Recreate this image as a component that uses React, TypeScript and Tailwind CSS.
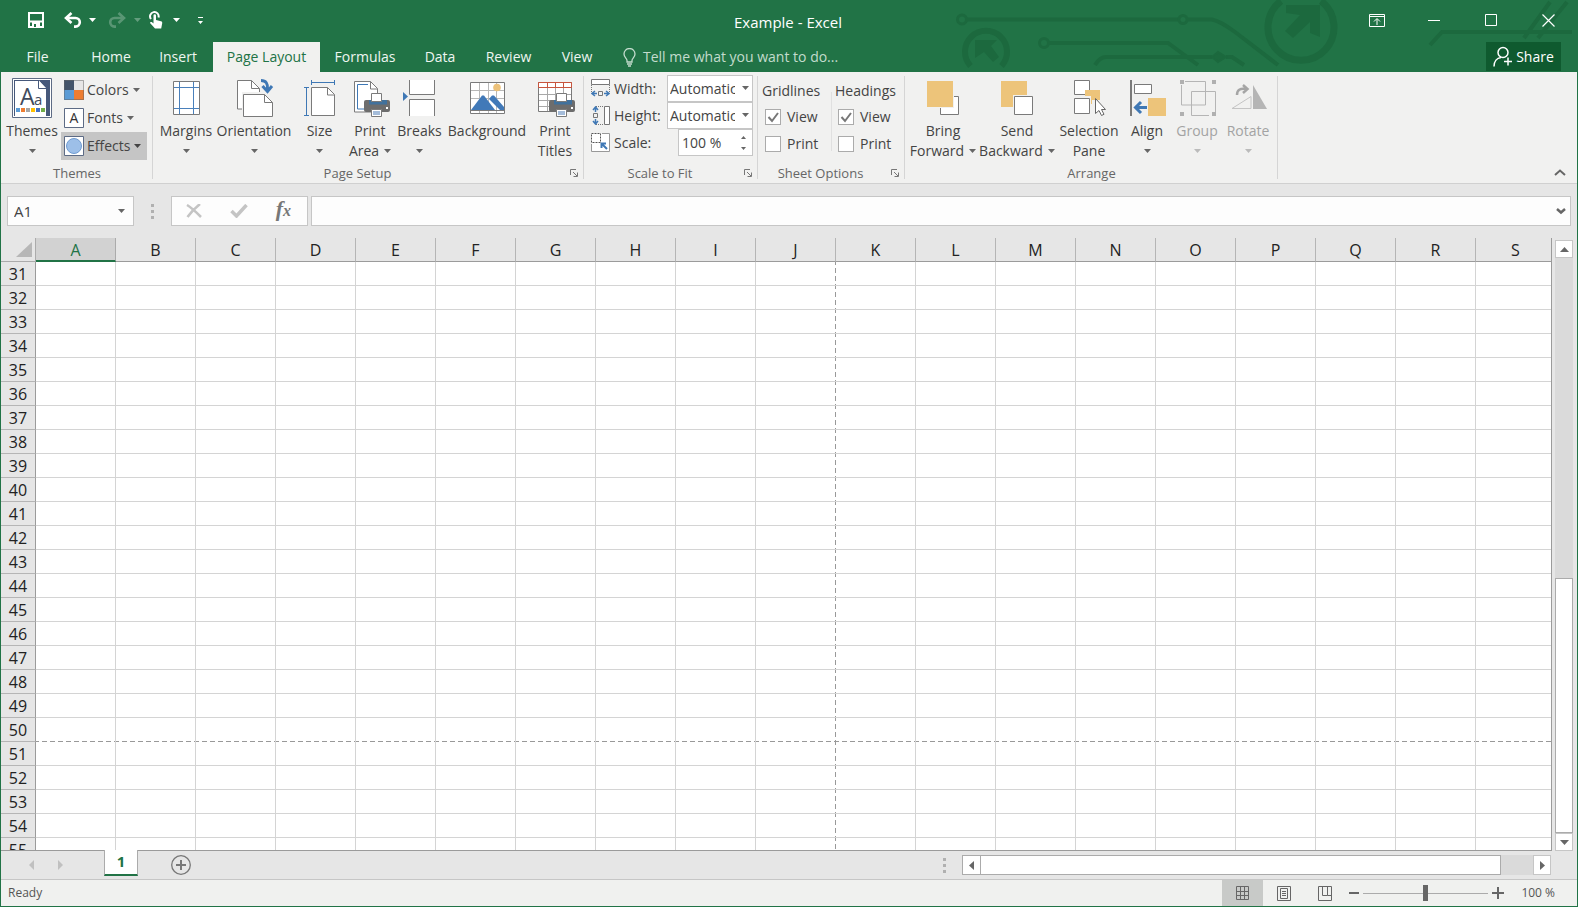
import { useState } from 'react';
import type { ReactNode } from 'react';

const columns = 'ABCDEFGHIJKLMNOPQRS'.split('');
const rows = Array.from({ length: 25 }, (_, i) => 31 + i);

const tabs = [
  { name: 'File', width: 'w-[73px]' },
  { name: 'Home', width: 'w-[74px]' },
  { name: 'Insert', width: 'w-[60px]' },
  { name: 'Page Layout', width: 'w-[107px] ml-[5px]' },
  { name: 'Formulas', width: 'w-[90px]' },
  { name: 'Data', width: 'w-[60px]' },
  { name: 'Review', width: 'w-[77px]' },
  { name: 'View', width: 'w-[60px]' },
];

function Caret({ className = 'text-[#666]' }: { className?: string }) {
  return (
    <svg width="7" height="4" viewBox="0 0 7 4" className={`shrink-0 ${className}`}>
      <path d="M0 0h7L3.5 4z" fill="currentColor" />
    </svg>
  );
}

/* ---------- Title bar ---------- */

function Circuit() {
  return (
    <svg width="628" height="72" viewBox="0 0 628 72" className="absolute -right-px top-0" fill="none" stroke="#1c693e" strokeWidth="4">
      <circle cx="12" cy="19.5" r="4.5" strokeWidth="3" />
      <path d="M17 19.5H228" />
      <circle cx="233" cy="19.5" r="4" strokeWidth="3" />
      <path d="M238 19.5H262Q270 21 285 32L328 65" />
      <circle cx="94" cy="43" r="4.5" strokeWidth="3" />
      <path d="M99 43H218L248 65" />
      <path d="M145 65Q150 57 156 57H262M276 57H282L294 65" />
      <path d="M262 57L268 52L276 57L268 62Z" fill="#1c693e" strokeWidth="2" />
      <path d="M20.5 66A21 21 0 1 1 51.5 66" strokeWidth="6" />
      <path d="M25 40H47L41 46L49 57L43 62L34 52L25 58Z" fill="#1c693e" stroke="none" />
      <path d="M331 1A33 33 0 1 0 371 1" strokeWidth="7" />
      <path d="M336 5H370V37L360 33V22L343 38L335 31L350 15L336 13Z" fill="#1c693e" stroke="none" />
      <path d="M480 45L492 32H622M574 38L600 2M588 38L617 2" />
    </svg>
  );
}

function TitleBar() {
  return (
    <div className="relative flex h-[42px] items-center pb-0.5 text-white">
      <div className="flex items-center">
        <button aria-label="Save" className="ml-[27px]">
          <svg width="16" height="16" viewBox="0 0 16 16">
            <path d="M1 1h14v14H1zM1 9.5h14" fill="none" stroke="#fff" strokeWidth="2" />
            <path d="M4 10h8v5H4z" fill="#fff" />
            <path d="M6 12h2v3H6z" fill="#217346" />
          </svg>
        </button>
        <button aria-label="Undo" className="ml-5">
          <svg width="18" height="16" viewBox="0 0 18 16" fill="none" stroke="#fff" strokeWidth="2.6">
            <path d="M2 6h9.5a4.3 4.3 0 0 1 0 8.6H10" />
            <path d="M7.5 1L2 6L7.5 11" />
          </svg>
        </button>
        <button aria-label="Undo history" className="ml-[7px]"><Caret className="text-white" /></button>
        <button aria-label="Redo" className="ml-3 opacity-25" disabled>
          <svg width="18" height="16" viewBox="0 0 18 16" fill="none" stroke="#fff" strokeWidth="2.6">
            <path d="M16 6H6.5a4.3 4.3 0 0 0 0 8.6H8" />
            <path d="M10.5 1L16 6L10.5 11" />
          </svg>
        </button>
        <button aria-label="Redo history" className="ml-2 opacity-30" disabled><Caret className="text-white" /></button>
        <button aria-label="Touch mode" className="ml-2">
          <svg width="14" height="18" viewBox="0 0 14 18">
            <path d="M2 8A4.3 4.3 0 1 1 9.5 6.5" fill="none" stroke="#fff" strokeWidth="2" />
            <path d="M4.5 4.5a1.2 1.2 0 0 1 2.5 0V9l5 1.2c1 .3 1.4 1 1.2 2L12.2 17.5H6L1 12c0-1 1.5-1.4 2.3-.6l1.2 1z" fill="#fff" />
          </svg>
        </button>
        <button aria-label="Touch options" className="ml-2.5"><Caret className="text-white" /></button>
        <button aria-label="Customize toolbar" className="ml-[18px]">
          <svg width="5" height="7" viewBox="0 0 5 7"><path d="M0 0h5v1H0zM0 4h5L2.5 7z" fill="#fff" /></svg>
        </button>
      </div>
      <h1 className="absolute inset-x-0 top-3 pr-0.5 text-center text-[15px] leading-[21px]">Example - Excel</h1>
      <div className="relative ml-auto flex">
        <button aria-label="Ribbon display options" className="flex w-[57px] justify-center">
          <svg width="16" height="13" viewBox="0 0 16 13" fill="none" stroke="#fff">
            <path d="M.5.5h15v12H.5zM.5 2.5h15M8 11V5M5 7.5L8 4.5L11 7.5" />
          </svg>
        </button>
        <button aria-label="Minimize" className="flex w-[57px] items-center justify-center">
          <svg width="12" height="13" viewBox="0 0 12 13"><path d="M0 6.5h12" stroke="#fff" /></svg>
        </button>
        <button aria-label="Maximize" className="flex w-[57px] justify-center">
          <svg width="12" height="12" viewBox="0 0 12 12"><path d="M.5.5h11v11H.5z" fill="none" stroke="#fff" /></svg>
        </button>
        <button aria-label="Close" className="flex w-[58px] justify-center">
          <svg width="13" height="13" viewBox="0 0 13 13"><path d="M.5.5l12 12M12.5.5l-12 12" stroke="#fff" strokeWidth="1.2" /></svg>
        </button>
      </div>
    </div>
  );
}

function TabBar() {
  const [active, setActive] = useState('Page Layout');
  return (
    <nav className="relative flex h-[30px] text-[14px] leading-[30px]">
      {tabs.map((tab) => (
        <button
          key={tab.name}
          onClick={() => setActive(tab.name)}
          className={`${tab.width} ${active === tab.name ? 'bg-[#f1f1ef] text-[#217346]' : 'text-[#eef6f1]'}`}
        >
          {tab.name}
        </button>
      ))}
      <button className="ml-4 flex items-center gap-[7px] text-[#c3dccd]">
        <svg width="13" height="19" viewBox="0 0 13 19" fill="none" stroke="currentColor" strokeWidth="1.3">
          <path d="M4 14V12.5C4 10.5 1 9.5 1 6a5.5 5.5 0 0 1 11 0c0 3.500-3 4.500-3 6.500V14zM4 16h5M5 18h3" />
        </svg>
        Tell me what you want to do...
      </button>
      <button className="mb-px ml-auto mr-4 flex w-[75px] items-center justify-center gap-[3px] bg-[#0f5a2f] text-white">
        <svg width="20" height="21" viewBox="0 0 20 21" fill="none" stroke="#fff" strokeWidth="1.5">
          <circle cx="10" cy="6.5" r="5" />
          <path d="M1 20.5C1 15.5 4 12 8 11.500M11 15.500h8M15 11.500v8" />
        </svg>
        Share
      </button>
    </nav>
  );
}

/* ---------- Ribbon ---------- */

function Icon({ children }: { children: ReactNode }) {
  return (
    <svg width="44" height="40" viewBox="0 0 44 40" fill="none" stroke="#7a7a7a" className="shrink-0">
      {children}
    </svg>
  );
}

function Printer() {
  return (
    <g stroke="none">
      <path d="M18 22h22q2 0 2 2v8q0 2-2 2H18q-2 0-2-2v-8q0-2 2-2z" fill="#6d6d6d" />
      <path d="M21 22h18v4.5H21z" fill="#41719c" />
      <path d="M23.5 15.5h10v8h-10z" fill="#fff" stroke="#7a7a7a" />
      <path d="M38 29h2v2h-2z" fill="#fff" />
      <path d="M23.5 31.5h10v7h-10z" fill="#fff" stroke="#7a7a7a" />
      <path d="M25 34h7M25 36h7" stroke="#4a7ab5" />
    </g>
  );
}

const icons = {
  themes: (
    <svg width="40" height="40" viewBox="0 0 40 40" className="shrink-0">
      <path d="M.5.5h39v39H.5z" fill="#fff" stroke="#5d6b85" />
      <path d="M2 2h36v36H2z" fill="#46587a" />
      <path d="M3 3h24l7 7v28H3z" fill="#fff" />
      <path d="M26.5 2v8.5H34" fill="#fff" stroke="#46587a" />
      <text x="8" y="27" fontSize="23" fill="#404a5c" fontFamily="Open Sans">A</text>
      <text x="22" y="27" fontSize="15" fill="#404a5c" fontFamily="Open Sans">a</text>
      <path d="M4 30h4v4H4z" fill="#5b9bd5" />
      <path d="M9 30h4v4H9z" fill="#ed7d31" />
      <path d="M14 30h4v4h-4z" fill="#a5a5a5" />
      <path d="M19 30h4v4h-4z" fill="#ffc000" />
      <path d="M24 30h4v4h-4z" fill="#4472c4" />
      <path d="M29 30h4v4h-4z" fill="#70ad47" />
    </svg>
  ),
  margins: (
    <Icon>
      <path d="M9.5 3.5h26v33h-26z" fill="#fff" />
      <path d="M15.5 4v32M29.5 4v32M10 9.5h25M10 30.5h25" stroke="#4a80bb" />
    </Icon>
  ),
  orientation: (
    <Icon>
      <path d="M5.5 2.5h14l8 8v20.5h-22z" fill="#fff" />
      <path d="M19.5 2.5v8h8" />
      <path d="M10 14h32v25.5H10z" fill="#f1f1f0" stroke="none" />
      <path d="M11.5 16.5h21l8 8v14h-29z" fill="#fff" />
      <path d="M32.5 16.5v8h8" />
      <path d="M29 2.5c5 0 7 3 6.500 9M30.500 8l5 5.500l4.500-5.500" stroke="#3f78b5" strokeWidth="3" />
    </Icon>
  ),
  size: (
    <Icon>
      <path d="M13.5 9.5h16l7 7v21h-23z" fill="#fff" />
      <path d="M29.5 9.5v7.5h7" />
      <path d="M13.5 4.5h23M13.5 2v5M36.5 2v5M8.5 9.5v28M6 9.5h5M6 37.5h5" stroke="#3f78b5" />
    </Icon>
  ),
  printArea: (
    <Icon>
      <path d="M6.5 3.5h16l7 7v23.5h-23z" fill="#fff" />
      <path d="M22.5 3.5v7.5h7" />
      <path d="M20 6.5H9.5v24.5H16" stroke="#3f78b5" />
      <Printer />
    </Icon>
  ),
  breaks: (
    <Icon>
      <path d="M11.5 2v14.5h25V2M11.5 38V21.5h25V38" fill="#fff" />
      <path d="M5 14v9l5-4.5z" fill="#3f78b5" stroke="none" />
    </Icon>
  ),
  background: (
    <Icon>
      <path d="M5.5 4.5h34v31h-34z" fill="#fff" />
      <path d="M14.5 5v30M23.5 5v30M31.5 5v30M6 12.5h33M6 20.5h33" stroke="#b8b8b8" />
      <path d="M6 32l11-14.5h2L30 32z" fill="#4179b8" stroke="none" />
      <path d="M24 21l3-3.5h2L39 29v3h-4z" fill="#4179b8" stroke="none" />
      <path d="M6 32.5h33" />
      <circle cx="32" cy="9.5" r="3.8" fill="#ecc179" stroke="none" />
    </Icon>
  ),
  printTitles: (
    <Icon>
      <path d="M5.5 4.5h33v29h-33z" fill="#fff" />
      <path d="M14.5 10v23M22.5 10v23M30.5 10v23M6 16.5h32M6 22.5h32M6 28.5h32" stroke="#a8a8a8" />
      <path d="M5.5 4.5h33v5h-33zM14.5 5v5M22.5 5v5M30.5 5v5" stroke="#c8553d" />
      <Printer />
    </Icon>
  ),
  forward: (
    <Icon>
      <path d="M19.5 18.5h18v18h-18z" fill="#fff" />
      <path d="M5 2h28v28H5z" fill="#f1f1f0" stroke="none" />
      <path d="M6 3h26v26H6z" fill="#edc47a" stroke="none" />
    </Icon>
  ),
  backward: (
    <Icon>
      <path d="M6 3h26v26H6z" fill="#edc47a" stroke="none" />
      <path d="M18 17h21v21H18z" fill="#f1f1f0" stroke="none" />
      <path d="M19.5 18.5h18v18h-18z" fill="#fff" />
    </Icon>
  ),
  selection: (
    <Icon>
      <path d="M7.5 2.5h15v14h-15zM7.5 20.5h15v15h-15z" fill="#fff" />
      <path d="M18 12h15v10H25v4h-1V18h-6z" fill="#edc47a" stroke="none" />
      <path d="M28.500 20.500v15l3.500-3l2.500 5l2.500-1.200l-2.500-4.800h4z" fill="#fff" stroke="#666" />
    </Icon>
  ),
  align: (
    <Icon>
      <path d="M6 2v36" strokeWidth="2" />
      <path d="M9.5 6.5h17v9h-17z" fill="#fff" />
      <path d="M22 29.5H11M16 24L10.5 29.5L16 35" stroke="#3f78b5" strokeWidth="3" />
      <path d="M23 20h18v18H23z" fill="#edc47a" stroke="none" />
    </Icon>
  ),
  group: (
    <Icon>
      <path d="M10 3.5h20.5v23.5H6.5V7M34 37.5H16.5v-24h24V34" stroke="#b5b5b5" />
      <path d="M5 2h4v4H5zM37 2h4v4h-4zM5 34h4v4H5zM37 34h4v4h-4z" fill="#b0b0b0" stroke="none" />
    </Icon>
  ),
  rotate: (
    <Icon>
      <path d="M6 30.5l19-12v12z" stroke="#c4c4c4" />
      <path d="M27 7v24h14z" fill="#b5b5b5" stroke="none" />
      <path d="M11 17c0-5 3-7 9-6M17 7l4.5 4L17 15" stroke="#a5a5a5" strokeWidth="2.5" />
    </Icon>
  ),
};

type BigButtonProps = {
  icon: keyof typeof icons;
  label: string;
  second?: string;
  caret?: boolean;
  disabled?: boolean;
  width: string;
};

function BigButton({ icon, label, second, caret = true, disabled, width }: BigButtonProps) {
  return (
    <button disabled={disabled} className={`flex shrink-0 flex-col items-center whitespace-nowrap pt-1.5 ${width} ${disabled ? 'text-[#a3a3a3]' : 'text-[#444]'}`}>
      {icons[icon]}
      <span className="mt-[3px] h-5">{label}</span>
      <span className="flex h-5 items-center gap-[5px]">
        {second}
        {caret && <Caret className={disabled ? 'text-[#bbb]' : 'text-[#666]'} />}
      </span>
    </button>
  );
}

function Group({ name, width, launcher, children }: { name: string; width: string; launcher?: boolean; children: ReactNode }) {
  return (
    <section aria-label={name} className={`relative flex shrink-0 flex-col ${width}`}>
      <div className="flex flex-1">{children}</div>
      <div className={`flex h-5 items-center justify-center text-[13px] text-[#666] ${launcher ? 'pr-[22px]' : ''}`}>{name}</div>
      {launcher && (
        <button aria-label={`${name} settings`} className="absolute bottom-1.5 right-1.5">
          <svg width="8" height="8" viewBox="0 0 8 8" fill="none" stroke="#777">
            <path d="M.5 6V.5H6M3 3l4 4M7.5 3.5v4h-4" />
          </svg>
        </button>
      )}
      <div className="absolute bottom-1 right-0 top-1 w-px bg-[#d5d5d5]" />
    </section>
  );
}

function SmallButton({ label, icon, active }: { label: string; icon: ReactNode; active?: boolean }) {
  return (
    <button className={`flex h-7 items-center gap-[3px] pl-[3px] pr-1.5 ${active ? 'bg-[#c5c5c5]' : ''}`}>
      <svg width="20" height="20" viewBox="0 0 20 20">{icon}</svg>
      <span>{label}</span>
      <Caret className={active ? 'ml-px text-[#444]' : 'ml-px text-[#666]'} />
    </button>
  );
}

function ScaleSelect({ id, label, icon }: { id: string; label: string; icon: ReactNode }) {
  return (
    <div className="flex h-[27px] items-center">
      {icon}
      <label htmlFor={id} className="ml-1 flex-1">{label}</label>
      <div className="relative h-[27px] w-[86px]">
        <select id={id} className="h-full w-full appearance-none border border-[#c6c6c6] bg-white pl-0.5 pr-[17px] text-[14px] text-[#444]">
          <option>Automatic</option>
        </select>
        <div className="pointer-events-none absolute right-1 top-[11px]"><Caret /></div>
      </div>
    </div>
  );
}

function Check({ id, label, defaultChecked }: { id: string; label: string; defaultChecked?: boolean }) {
  return (
    <div className="flex h-[27px] items-center gap-1.5 pl-[3px]">
      <span className="relative flex">
        <input id={id} type="checkbox" defaultChecked={defaultChecked} className="peer size-4 appearance-none border border-[#ababab] bg-white" />
        <svg width="16" height="16" viewBox="0 0 16 16" className="pointer-events-none absolute hidden peer-checked:block">
          <path d="M3.5 8l3.5 4L13 4" fill="none" stroke="#777" strokeWidth="2" />
        </svg>
      </span>
      <label htmlFor={id}>{label}</label>
    </div>
  );
}

function Ribbon() {
  return (
    <div className="relative flex h-28 shrink-0 border-b border-[#d0d0d0] bg-[#f1f1f0] text-[14px] leading-5 text-[#444]">
      <Group name="Themes" width="w-[152px]">
        <BigButton icon="themes" label="Themes" width="w-[60px] pl-0.5" />
        <div className="flex flex-col items-start pt-1">
          <SmallButton
            label="Colors"
            icon={
              <>
                <path d="M0 0h10v10H0z" fill="#44546a" />
                <path d="M10 0h10v10H10z" fill="#e7e6e6" />
                <path d="M0 10h10v10H0z" fill="#5b9bd5" />
                <path d="M10 10h10v10H10z" fill="#ed7d31" />
                <path d="M.5.5h19v19H.5z" fill="none" stroke="#666" strokeOpacity=".5" />
              </>
            }
          />
          <SmallButton
            label="Fonts"
            icon={
              <>
                <path d="M.5.5h19v19H.5z" fill="#fff" stroke="#5d6b85" />
                <text x="10" y="15" textAnchor="middle" fontSize="14" fill="#333" fontFamily="Open Sans">A</text>
              </>
            }
          />
          <SmallButton
            active
            label="Effects"
            icon={
              <>
                <path d="M.5.5h19v19H.5z" fill="#fff" stroke="#5d6b85" />
                <circle cx="10" cy="10" r="7.5" fill="#9dbfe8" stroke="#6f9bd1" />
              </>
            }
          />
        </div>
      </Group>

      <Group name="Page Setup" width="w-[431px]" launcher>
        <div className="flex pl-1">
          <BigButton icon="margins" label="Margins" width="w-[58px]" />
          <BigButton icon="orientation" label="Orientation" width="w-[78px]" />
          <BigButton icon="size" label="Size" width="w-[53px]" />
          <BigButton icon="printArea" label="Print" second="Area" width="w-12" />
          <BigButton icon="breaks" label="Breaks" width="w-[51px]" />
          <BigButton icon="background" label="Background" caret={false} width="w-[84px]" />
          <BigButton icon="printTitles" label="Print" second="Titles" caret={false} width="w-[52px]" />
        </div>
      </Group>

      <Group name="Scale to Fit" width="w-[174px]" launcher>
        <div className="flex flex-1 flex-col pl-[7px] pr-[5px] pt-[3px]">
          <ScaleSelect
            id="fit-width"
            label="Width:"
            icon={
              <svg width="19" height="19" viewBox="0 0 19 19" fill="none" stroke="#777">
                <path d="M.5.5h18v5H.5z" fill="#fff" />
                <path d="M.5 6v8M18.5 6v8" strokeDasharray="1 1" />
                <path d="M7.5 12.5h4v4h-4z" />
                <path d="M6 14.5H1M4 12l-3 2.5L4 17M13 14.5h5M15 12l3 2.500L15 17" stroke="#3f78b5" strokeWidth="1.5" />
              </svg>
            }
          />
          <ScaleSelect
            id="fit-height"
            label="Height:"
            icon={
              <svg width="19" height="19" viewBox="0 0 19 19" fill="none" stroke="#777">
                <path d="M13.5.5h5v18h-5z" fill="#fff" />
                <path d="M5 .5h8M5 18.5h8" strokeDasharray="1 1" />
                <path d="M2.5 7.5h4v4h-4z" />
                <path d="M4.5 6V1M2 4l2.5-3L7 4M4.5 13v5M2 15l2.500 3L7 15" stroke="#3f78b5" strokeWidth="1.5" />
              </svg>
            }
          />
          <div className="flex h-[27px] items-center">
            <svg width="19" height="19" viewBox="0 0 19 19" fill="none" stroke="#777">
              <path d="M11 .5h7.5v18H.5V11" fill="#fff" stroke="#999" />
              <path d="M.5.5h9v9h-9z" fill="#fff" stroke="#555" strokeDasharray="2 1" />
              <path d="M16 16l-5-5M10.5 15v-4.5H15" stroke="#3f78b5" strokeWidth="2" />
            </svg>
            <label htmlFor="scale" className="ml-1 flex-1">Scale:</label>
            <div className="relative h-[27px] w-[75px]">
              <input id="scale" defaultValue="100 %" className="h-full w-full border border-[#c6c6c6] bg-white pl-[3px] pr-5 text-[14px] text-[#444]" />
              <div className="absolute inset-y-0 right-[7px] flex flex-col justify-center gap-2">
                <button aria-label="Increase scale"><svg width="5" height="3" viewBox="0 0 5 3" className="block"><path d="M0 3h5L2.5 0z" fill="#666" /></svg></button>
                <button aria-label="Decrease scale"><svg width="5" height="3" viewBox="0 0 5 3" className="block"><path d="M0 0h5L2.5 3z" fill="#666" /></svg></button>
              </div>
            </div>
          </div>
        </div>
      </Group>

      <Group name="Sheet Options" width="w-[147px]" launcher>
        <fieldset className="w-[73px] pl-1 pt-1.5">
          <legend className="float-left h-[25px] w-full leading-[26px]">Gridlines</legend>
          <Check id="grid-view" label="View" defaultChecked />
          <Check id="grid-print" label="Print" />
        </fieldset>
        <div className="mb-3 mt-5 w-px bg-[#e0e0e0]" />
        <fieldset className="flex-1 pl-[3px] pt-1.5">
          <legend className="float-left h-[25px] w-full leading-[26px]">Headings</legend>
          <Check id="head-view" label="View" defaultChecked />
          <Check id="head-print" label="Print" />
        </fieldset>
      </Group>

      <Group name="Arrange" width="w-[373px]">
        <div className="flex pl-[3px]">
          <BigButton icon="forward" label="Bring" second="Forward" width="w-[70px]" />
          <BigButton icon="backward" label="Send" second="Backward" width="w-[78px]" />
          <BigButton icon="selection" label="Selection" second="Pane" caret={false} width="w-[66px]" />
          <BigButton icon="align" label="Align" width="w-[50px]" />
          <BigButton icon="group" label="Group" disabled width="w-[50px]" />
          <BigButton icon="rotate" label="Rotate" disabled width="w-[52px]" />
        </div>
      </Group>

      <button aria-label="Collapse ribbon" className="mb-[7px] ml-auto mr-[11px] self-end">
        <svg width="12" height="7" viewBox="0 0 12 7"><path d="M1 6l5-4.5L11 6" fill="none" stroke="#666" strokeWidth="2" /></svg>
      </button>
    </div>
  );
}

/* ---------- Formula bar and grid ---------- */

function Dots() {
  return (
    <svg width="3" height="15" viewBox="0 0 3 15" className="shrink-0">
      <path d="M0 0h3v3H0zM0 6h3v3H0zM0 12h3v3H0z" fill="#b0b0b0" />
    </svg>
  );
}

function FormulaBar() {
  return (
    <div className="flex h-[54px] shrink-0 items-start pl-1.5 pr-1.5 pt-3">
      <div className="relative h-[30px] w-[127px]">
        <input aria-label="Name box" defaultValue="A1" className="h-full w-full border border-[#c6c6c6] bg-[#fdfdfd] pl-1.5 text-[15px] text-[#444]" />
        <button aria-label="Name list" className="absolute inset-y-0 right-[9px]"><Caret /></button>
      </div>
      <div className="flex h-[30px] w-[37px] items-center justify-center"><Dots /></div>
      <div className="flex h-[30px] w-[137px] items-center justify-between border border-[#c6c6c6] bg-[#fdfdfd] px-3.5">
        <button aria-label="Cancel" disabled>
          <svg width="16" height="14" viewBox="0 0 16 14"><path d="M1 1c5 3 10 8 14 12M14 0C9 4 5 8 1.5 13" fill="none" stroke="#c4c4c4" strokeWidth="2.5" /></svg>
        </button>
        <button aria-label="Enter" disabled>
          <svg width="18" height="14" viewBox="0 0 18 14"><path d="M1.5 7l5 5L16.5 1" fill="none" stroke="#c4c4c4" strokeWidth="3.5" /></svg>
        </button>
        <button aria-label="Insert function" className="pb-0.5 pr-0.5 font-['Liberation_Serif',serif] text-[22px] font-bold italic leading-6 text-[#777]">
          f<span className="text-[16px]">x</span>
        </button>
      </div>
      <div className="relative ml-[3px] h-[30px] flex-1">
        <input aria-label="Formula" className="h-full w-full border border-[#c6c6c6] bg-[#fdfdfd] px-2 text-[14px]" />
        <button aria-label="Expand formula bar" className="absolute inset-y-0 right-[5px]">
          <svg width="10" height="7" viewBox="0 0 10 7"><path d="M1 1l4 3.5L9 1" fill="none" stroke="#666" strokeWidth="2.5" /></svg>
        </button>
      </div>
    </div>
  );
}

// Page breaks fall after column J and row 50
function cellClass(col: string, row: number) {
  if (col === 'J' && row === 50) {
    return 'p-0 bg-[linear-gradient(to_bottom,#999_5px,transparent_5px),linear-gradient(to_right,#999_5px,transparent_5px)] bg-[length:1px_8px,8px_1px] [background-position:right_-2px,-2px_bottom] [background-repeat:repeat-y,repeat-x]';
  }
  if (col === 'J') {
    return 'border-b border-[#d4d4d4] p-0 bg-[linear-gradient(to_bottom,#999_5px,transparent_5px)] bg-[length:1px_8px] [background-position:right_-2px] bg-repeat-y';
  }
  if (row === 50) {
    return 'border-r border-[#d4d4d4] p-0 bg-[linear-gradient(to_right,#999_5px,transparent_5px)] bg-[length:8px_1px] [background-position:-2px_bottom] bg-repeat-x';
  }
  return 'border-b border-r border-[#d4d4d4] p-0';
}

function Grid() {
  return (
    <div className="min-w-0 flex-1 overflow-hidden border-b border-r border-[#9b9b9b] bg-white">
      <table className="w-[1555px] table-fixed border-separate border-spacing-0 text-[16px] leading-[22px] text-[#222]">
        <thead>
          <tr className="h-6 bg-[#e6e6e6]">
            <th className="w-[35px] border-b border-r border-[#ababab] p-0">
              <svg width="16" height="15" viewBox="0 0 16 15" className="ml-auto mr-[3px]"><path d="M16 0v15H0z" fill="#b7b7b7" /></svg>
            </th>
            {columns.map((col) => (
              <th
                key={col}
                scope="col"
                className={
                  col === 'A'
                    ? 'h-6 w-20 border-b-2 border-r border-b-[#217346] border-r-[#ababab] bg-[#d2d2d2] p-0 pt-px font-normal leading-5 text-[#217346]'
                    : 'h-6 w-20 border-b border-r border-b-[#9b9b9b] border-r-[#b5b5b5] p-0 font-normal'
                }
              >
                {col}
              </th>
            ))}
          </tr>
        </thead>
        <tbody>
          {rows.map((row) => (
            <tr key={row} className="h-6">
              <th scope="row" className="border-b border-r border-b-[#b5b5b5] border-r-[#9b9b9b] bg-[#e6e6e6] p-0 pt-px font-normal">{row}</th>
              {columns.map((col) => (
                <td key={col} className={cellClass(col, row)} />
              ))}
            </tr>
          ))}
        </tbody>
      </table>
    </div>
  );
}

const scrollButton = 'flex size-[18px] shrink-0 items-center justify-center border border-[#c6c6c6] bg-white';

function VerticalScroll() {
  return (
    <div className="ml-[3px] mr-1 flex w-[18px] flex-col pt-0.5">
      <button aria-label="Scroll up" className={scrollButton}>
        <svg width="9" height="5" viewBox="0 0 9 5"><path d="M0 5h9L4.5 0z" fill="#666" /></svg>
      </button>
      <div className="flex-[321] bg-[#dadada]" />
      <div className="flex-[253] border border-[#ababab] bg-white" />
      <button aria-label="Scroll down" className={scrollButton}>
        <svg width="9" height="5" viewBox="0 0 9 5"><path d="M0 0h9L4.5 5z" fill="#666" /></svg>
      </button>
    </div>
  );
}

function SheetBar() {
  return (
    <div className="flex h-[29px] shrink-0 items-start border-b border-[#c6c6c6] pr-[26px]">
      <button aria-label="Previous sheet" disabled className="ml-7 mt-[9px]">
        <svg width="5" height="10" viewBox="0 0 5 10"><path d="M5 0v10L0 5z" fill="#c0c0c0" /></svg>
      </button>
      <button aria-label="Next sheet" disabled className="ml-6 mt-[9px]">
        <svg width="5" height="10" viewBox="0 0 5 10"><path d="M0 0v10l5-5z" fill="#c0c0c0" /></svg>
      </button>
      <button className="-mt-px ml-[41px] h-[26px] w-[34px] border-x border-b-2 border-x-[#ababab] border-b-[#217346] bg-white pb-0.5 text-[15px] font-bold leading-[22px] text-[#217346]">1</button>
      <button aria-label="New sheet" className="ml-[33px] mt-1">
        <svg width="20" height="20" viewBox="0 0 20 20" fill="none" stroke="#777">
          <circle cx="10" cy="10" r="9.3" strokeWidth="1.3" />
          <path d="M5 10h10M10 5v10" strokeWidth="2" />
        </svg>
      </button>
      <div className="ml-auto mr-4 mt-[7px]"><Dots /></div>
      <div className="mt-1 flex h-5 w-[38%] max-w-[589px]">
        <button aria-label="Scroll left" className="flex w-[19px] items-center justify-center border border-[#ababab] bg-white">
          <svg width="5" height="9" viewBox="0 0 5 9"><path d="M5 0v9L0 4.5z" fill="#666" /></svg>
        </button>
        <div className="flex-[520] border border-l-0 border-[#ababab] bg-white" />
        <div className="flex-[32] bg-[#dadada]" />
        <button aria-label="Scroll right" className="flex w-[18px] items-center justify-center border border-[#c6c6c6] bg-white">
          <svg width="5" height="9" viewBox="0 0 5 9"><path d="M0 0v9l5-4.5z" fill="#666" /></svg>
        </button>
      </div>
    </div>
  );
}

function StatusBar() {
  const [zoom, setZoom] = useState(50);
  return (
    <footer className="flex h-[26px] shrink-0 items-center bg-[#f0f1ef] pl-[7px] pr-[22px] text-[12px] text-[#555]">
      <span>Ready</span>
      <div className="ml-auto flex h-full">
        <button aria-label="Normal view" className="flex w-[41px] items-center justify-center bg-[#c8cac8]">
          <svg width="13" height="15" viewBox="0 0 13 15" fill="none" stroke="#666"><path d="M.5.5h12v13H.5zM4.5 1v12M8.5 1v12M1 5.5h11M1 9.5h11" /></svg>
        </button>
        <button aria-label="Page layout view" className="flex w-[41px] items-center justify-center">
          <svg width="14" height="15" viewBox="0 0 14 15" fill="none" stroke="#666"><path d="M.5.5h13v14H.5zM3.5 2.5h7v10h-7zM5 5.5h4M5 7.5h4M5 9.5h4" /></svg>
        </button>
        <button aria-label="Page break view" className="flex w-[41px] items-center justify-center">
          <svg width="14" height="15" viewBox="0 0 14 15" fill="none" stroke="#666"><path d="M.5.5h13v14H.5zM4.5 1v8.5h5V1M9.5 9.5H14" /></svg>
        </button>
      </div>
      <button aria-label="Zoom out" className="ml-1">
        <svg width="10" height="10" viewBox="0 0 10 10"><path d="M0 5h10" stroke="#666" strokeWidth="2" /></svg>
      </button>
      <input
        type="range"
        aria-label="Zoom"
        value={zoom}
        onChange={(e) => setZoom(Number(e.target.value))}
        className="mx-1 h-4 w-[125px] appearance-none bg-transparent [&::-webkit-slider-runnable-track]:h-px [&::-webkit-slider-runnable-track]:bg-[#ababab] [&::-webkit-slider-thumb]:-mt-2 [&::-webkit-slider-thumb]:h-4 [&::-webkit-slider-thumb]:w-[5px] [&::-webkit-slider-thumb]:appearance-none [&::-webkit-slider-thumb]:bg-[#666]"
      />
      <button aria-label="Zoom in">
        <svg width="12" height="12" viewBox="0 0 12 12"><path d="M0 6h12M6 0v12" stroke="#666" strokeWidth="2" /></svg>
      </button>
      <span className="ml-[17px]">100 %</span>
    </footer>
  );
}

export default function App() {
  return (
    <div className="flex h-screen flex-col overflow-hidden border-x border-b border-[#217346] bg-[#e6e6e6] font-['Open_Sans','Noto_Sans',sans-serif]">
      <header className="relative shrink-0 bg-[#217346]">
        <Circuit />
        <TitleBar />
        <TabBar />
      </header>
      <Ribbon />
      <FormulaBar />
      <main className="flex min-h-0 flex-1">
        <Grid />
        <VerticalScroll />
      </main>
      <SheetBar />
      <StatusBar />
    </div>
  );
}
